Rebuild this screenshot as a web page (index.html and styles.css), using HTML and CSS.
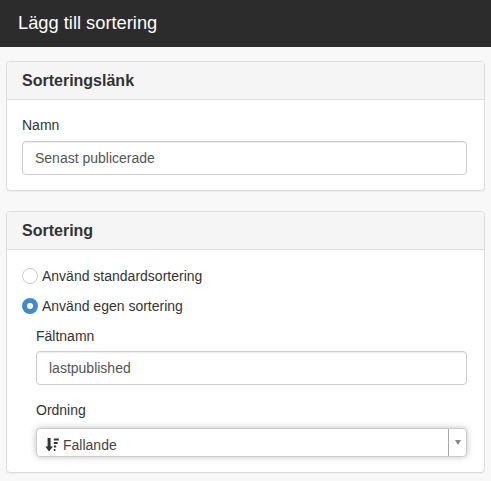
FILE: index.html
```html
<!DOCTYPE html>
<html lang="sv">
  <head>
    <meta charset="UTF-8" />
    <title>Lägg till sortering</title>
    <link rel="stylesheet" href="styles.css">
  </head>
  <body>
    <header class="top-bar">Lägg till sortering</header>

    <main class="content">
      <section class="panel panel-link">
        <h2 class="panel-heading">Sorteringslänk</h2>
        <div class="panel-body">
          <label class="field-label" for="name">Namn</label>
          <input class="text-input" id="name" type="text" value="Senast publicerade" />
        </div>
      </section>

      <section class="panel">
        <h2 class="panel-heading">Sortering</h2>
        <div class="panel-body panel-body-sort">
          <div class="radio-row">
            <span class="radio"></span>
            <span>Använd standardsortering</span>
          </div>
          <div class="radio-row">
            <span class="radio radio-checked"></span>
            <span>Använd egen sortering</span>
          </div>
          <div class="nested">
            <label class="field-label" for="field">Fältnamn</label>
            <input class="text-input" id="field" type="text" value="lastpublished" />
            <div class="field-label field-label-order">Ordning</div>
            <div class="select">
              <div class="select-value">
                <svg class="sort-icon" width="14" height="14" viewBox="0 0 14 14">
                  <path d="M2.6 0h3v8.6h2.3l-3.8 5L.3 8.6h2.3z" fill="#333" />
                  <path d="M8.8 .4h5v2h-5zM8.8 3.9h3.8v2H8.8zM8.8 7.4h2.4v2H8.8zM8.8 11h1.6v2H8.8z" fill="#333" />
                </svg>
                <span>Fallande</span>
              </div>
              <div class="select-toggle"><span class="caret"></span></div>
            </div>
          </div>
        </div>
      </section>
    </main>
  </body>
</html>
```

FILE: styles.css
```css
html,
body {
  margin: 0;
  height: 481px;
  overflow: hidden;
}
body {
  background: #f8f8f8;
  color: #333;
  font-family: "Liberation Sans", Arial, sans-serif;
  font-size: 14px;
}
.top-bar {
  height: 47px;
  line-height: 46px;
  padding-left: 18px;
  background: #2c2c2c;
  color: #fff;
  font-size: 18.3px;
}
.content {
  padding: 14px 6px 0;
}
.panel {
  background: #fff;
  border: 1px solid #ddd;
  border-radius: 4px;
  box-shadow: 0 1px 1px rgba(0, 0, 0, 0.05);
  overflow: hidden;
}
.panel-link {
  height: 130px;
  box-sizing: border-box;
  margin-bottom: 20px;
}
.panel-link .field-label {
  margin-bottom: 6px;
}
.panel-heading {
  margin: 0;
  height: 37px;
  line-height: 38px;
  padding-left: 15px;
  background: #f5f5f5;
  border-bottom: 1px solid #ddd;
  font-size: 16px;
  font-weight: bold;
}
.panel-body {
  padding: 15px 17px 0 15px;
}
.panel-body-sort {
  padding-top: 16px;
  padding-bottom: 15px;
}
.field-label {
  display: block;
  height: 20px;
  line-height: 20px;
  margin-bottom: 5px;
}
.field-label-order {
  margin-top: 15px;
  margin-bottom: 8px;
}
.text-input {
  display: block;
  width: 100%;
  height: 34px;
  box-sizing: border-box;
  padding: 6px 12px;
  border: 1px solid #ccc;
  border-radius: 4px;
  box-shadow: inset 0 1px 1px rgba(0, 0, 0, 0.075);
  color: #555;
  font-family: inherit;
  font-size: 14px;
}
.radio-row {
  display: flex;
  align-items: center;
  gap: 4px;
  height: 20px;
  margin-bottom: 10px;
}
.radio {
  width: 16px;
  height: 16px;
  box-sizing: border-box;
  border: 1px solid #ccc;
  border-radius: 50%;
  background: #fff;
}
.radio-checked {
  border: 5px solid #428bca;
}
.nested {
  padding-left: 14px;
}
.select {
  display: flex;
  height: 29px;
  box-sizing: border-box;
  border: 1px solid #ccc;
  border-radius: 4px;
  background: #fff;
  box-shadow: 0 0 6px rgba(0, 0, 0, 0.25);
}
.select-value {
  flex: 1;
  display: flex;
  align-items: center;
  gap: 4px;
  padding: 5px 0 0 8px;
  color: #444;
}
.sort-icon {
  flex: none;
}
.select-toggle {
  display: flex;
  align-items: center;
  justify-content: center;
  width: 17px;
  border-left: 1px solid #aaa;
}
.caret {
  width: 0;
  height: 0;
  border-left: 3px solid transparent;
  border-right: 3px solid transparent;
  border-top: 5px solid #888;
}
```
